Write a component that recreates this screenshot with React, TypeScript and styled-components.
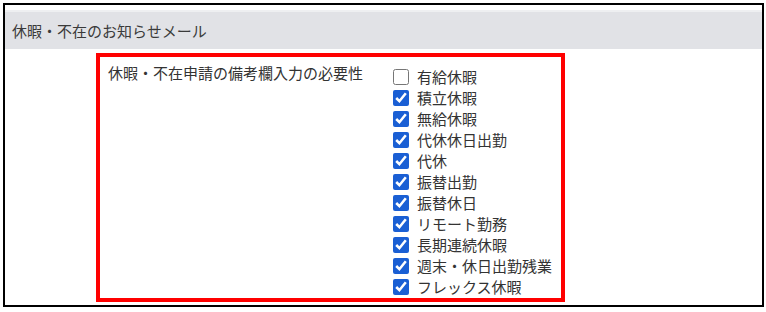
import styled, { createGlobalStyle } from 'styled-components'

const GlobalStyle = createGlobalStyle`
  html, body {
    margin: 0;
    padding: 0;
    background: #fff;
  }
  body {
    font-family: "Noto Sans CJK JP", "Noto Sans", sans-serif;
    color: #333;
  }
`

const Frame = styled.div`
  box-sizing: border-box;
  margin: 3px 0 0 3px;
  width: 761px;
  height: 304px;
  border: 2px solid #000;
  padding-top: 5px;
  display: flex;
  flex-direction: column;
`

const SectionHeader = styled.div`
  box-sizing: border-box;
  height: 39px;
  border-top: 2px solid #eeeff1;
  background: #e1e2e6;
  padding-left: 7px;
  display: flex;
  align-items: center;
  font-size: 15px;
  color: #3a3a3a;
`

const Highlight = styled.div`
  box-sizing: border-box;
  margin: 4px 0 0 91px;
  width: 469px;
  height: 249px;
  border: 4px solid #ff0000;
  display: grid;
  grid-template-columns: 293px 1fr;
`

const FieldLabel = styled.div`
  padding: 5px 0 0 8px;
  font-size: 15px;
  line-height: 21px;
  color: #333;
`

const OptionList = styled.ul`
  list-style: none;
  margin: 0;
  padding: 9px 0 0 0;
  display: flex;
  flex-direction: column;
`

const OptionRow = styled.li`
  height: 21px;
  display: flex;
  align-items: center;
  gap: 8px;
  font-size: 15px;
  color: #333;
`

const Check = styled.input.attrs({ type: 'checkbox' })`
  margin: 0;
  width: 16px;
  height: 16px;
  accent-color: #1a5fd4;
`

const options: { label: string; checked: boolean }[] = [
  { label: '有給休暇', checked: false },
  { label: '積立休暇', checked: true },
  { label: '無給休暇', checked: true },
  { label: '代休休日出勤', checked: true },
  { label: '代休', checked: true },
  { label: '振替出勤', checked: true },
  { label: '振替休日', checked: true },
  { label: 'リモート勤務', checked: true },
  { label: '長期連続休暇', checked: true },
  { label: '週末・休日出勤残業', checked: true },
  { label: 'フレックス休暇', checked: true },
]

export default function App() {
  return (
    <>
      <GlobalStyle />
      <Frame>
        <SectionHeader>休暇・不在のお知らせメール</SectionHeader>
        <Highlight>
          <FieldLabel>休暇・不在申請の備考欄入力の必要性</FieldLabel>
          <OptionList>
            {options.map((o) => (
              <OptionRow key={o.label}>
                <Check defaultChecked={o.checked} />
                {o.label}
              </OptionRow>
            ))}
          </OptionList>
        </Highlight>
      </Frame>
    </>
  )
}
